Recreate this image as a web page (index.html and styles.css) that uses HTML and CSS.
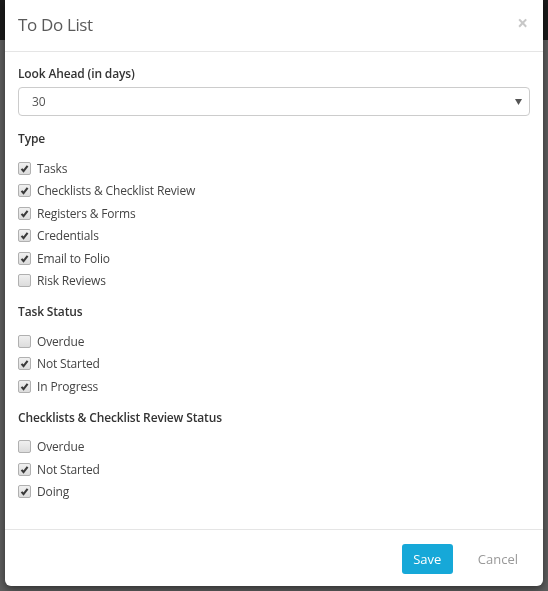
FILE: index.html
```html
<!DOCTYPE html>
<html lang="en">
<head>
    <meta charset="UTF-8">
    <title>To Do List</title>
    <link rel="stylesheet" href="styles.css">
</head>
<body>
<div class="backdrop">
    <div class="navbar"></div>
    <div class="page"></div>
</div>

<div class="modal">
    <div class="modal-header">
        <h4 class="modal-title">To Do List</h4>
        <span class="close">&times;</span>
    </div>

    <div class="modal-body">
        <div class="group-title">Look Ahead (in days)</div>
        <div class="select">
            <span>30</span>
            <svg class="caret" width="7" height="6" viewBox="0 0 7 6"><path d="M0 0H7L3.5 6Z" fill="#555"/></svg>
        </div>

        <div class="section">
            <div class="group-title">Type</div>
            <div class="checks">
                <label class="check on"><span class="box"><svg viewBox="0 0 10 10"><path d="M2.3 5.3L4.1 7.3L7.8 2.6" /></svg></span>Tasks</label>
                <label class="check on"><span class="box"><svg viewBox="0 0 10 10"><path d="M2.3 5.3L4.1 7.3L7.8 2.6" /></svg></span>Checklists &amp; Checklist Review</label>
                <label class="check on"><span class="box"><svg viewBox="0 0 10 10"><path d="M2.3 5.3L4.1 7.3L7.8 2.6" /></svg></span>Registers &amp; Forms</label>
                <label class="check on"><span class="box"><svg viewBox="0 0 10 10"><path d="M2.3 5.3L4.1 7.3L7.8 2.6" /></svg></span>Credentials</label>
                <label class="check on"><span class="box"><svg viewBox="0 0 10 10"><path d="M2.3 5.3L4.1 7.3L7.8 2.6" /></svg></span>Email to Folio</label>
                <label class="check"><span class="box"></span>Risk Reviews</label>
            </div>
        </div>

        <div class="section">
            <div class="group-title">Task Status</div>
            <div class="checks">
                <label class="check"><span class="box"></span>Overdue</label>
                <label class="check on"><span class="box"><svg viewBox="0 0 10 10"><path d="M2.3 5.3L4.1 7.3L7.8 2.6" /></svg></span>Not Started</label>
                <label class="check on"><span class="box"><svg viewBox="0 0 10 10"><path d="M2.3 5.3L4.1 7.3L7.8 2.6" /></svg></span>In Progress</label>
            </div>
        </div>

        <div class="section">
            <div class="group-title">Checklists &amp; Checklist Review Status</div>
            <div class="checks">
                <label class="check"><span class="box"></span>Overdue</label>
                <label class="check on"><span class="box"><svg viewBox="0 0 10 10"><path d="M2.3 5.3L4.1 7.3L7.8 2.6" /></svg></span>Not Started</label>
                <label class="check on"><span class="box"><svg viewBox="0 0 10 10"><path d="M2.3 5.3L4.1 7.3L7.8 2.6" /></svg></span>Doing</label>
            </div>
        </div>
    </div>

    <div class="modal-footer">
        <button class="btn save">Save</button>
        <button class="btn cancel">Cancel</button>
    </div>
</div>
</body>
</html>
```

FILE: styles.css
```css
html, body {
    margin: 0;
    height: 100%;
    overflow: hidden;
}

body {
    font-family: "Open Sans", "Liberation Sans", sans-serif;
    font-size: 12px;
    letter-spacing: -0.15px;
    color: #444;
    background: #5f5f5f;
}

.backdrop {
    position: fixed;
    inset: 0;
    display: flex;
    flex-direction: column;
}

.navbar {
    height: 40px;
    background: #1b1b1b;
}

.page {
    flex: 1;
    background: #5f5f5f;
}

.modal {
    position: absolute;
    top: 0;
    left: 5px;
    width: 538px;
    height: 586px;
    display: flex;
    flex-direction: column;
    background: #fff;
    border-radius: 0 0 6px 6px;
    box-shadow: 0 3px 9px rgba(0, 0, 0, 0.5);
}

.modal-header {
    height: 51px;
    display: flex;
    align-items: center;
    justify-content: space-between;
    padding: 0 15px 0 13px;
    border-bottom: 1px solid #e5e5e5;
    border-radius: 6px 6px 0 0;
}

.modal-title {
    margin: 0 0 2px;
    font-size: 17px;
    font-weight: 400;
    color: #5a5a5a;
    letter-spacing: -0.35px;
}

.close {
    font-size: 19px;
    font-weight: 700;
    color: #c8c8c8;
    line-height: 1;
    margin-top: -4px;
}

.modal-body {
    flex: 1;
    padding: 13px 13px 0;
}

.group-title {
    line-height: 18px;
    font-weight: 600;
    color: #333;
}

.select {
    position: relative;
    height: 27px;
    margin-top: 4px;
    border: 1px solid #ccc;
    border-radius: 4px;
    display: flex;
    align-items: center;
    padding-left: 13px;
    color: #555;
}

.caret {
    position: absolute;
    right: 7px;
    top: 11px;
}

.section {
    margin-top: 14px;
}

.section + .section {
    margin-top: 11px;
}

.checks {
    margin-top: 9px;
}

.check {
    display: flex;
    align-items: center;
    height: 22.5px;
    color: #444;
}

.box {
    width: 11px;
    height: 11px;
    margin-right: 6px;
    border: 1px solid #b0b0b0;
    border-radius: 2px;
    background: linear-gradient(#f0f0f0, #dcdcdc);
    display: flex;
}

.box svg {
    width: 11px;
    height: 11px;
    fill: none;
    stroke: #3a3a3a;
    stroke-width: 1.9;
}

.modal-footer {
    height: 56px;
    border-top: 1px solid #e5e5e5;
    display: flex;
    align-items: center;
    justify-content: flex-end;
    padding: 0 13px 0 0;
    gap: 13px;
}

.btn {
    font-family: inherit;
    font-size: 13px;
    border: none;
    border-radius: 3px;
    height: 30px;
    cursor: pointer;
    margin-top: 2px;
}

.save {
    width: 51px;
    background: #16a8d8;
    color: #fff;
}

.cancel {
    background: transparent;
    color: #999;
    padding: 0 12px;
}
```
